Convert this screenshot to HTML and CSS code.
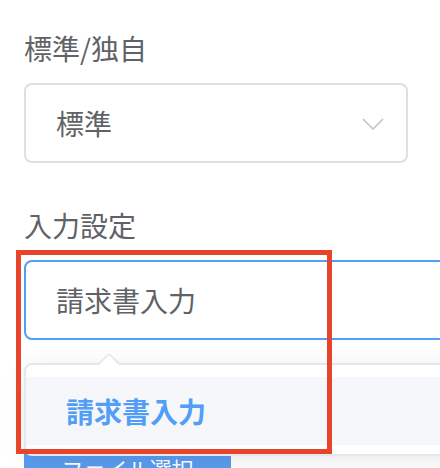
FILE: index.html
```html
<!DOCTYPE HTML>
<html>
<head>
    <title>入力設定</title>
    <meta name="viewport" content="width=device-width, initial-scale=1">
    <meta http-equiv="content-type" content="text/html; charset=utf-8">
    <link rel="stylesheet" href="styles.css">
</head>
<body>
    <div class="page">

      <div class="form-item">
        <div class="form-label">標準/独自</div>
        <div class="select">
          <span class="select-value">標準</span>
          <svg class="chevron" width="22" height="12" viewBox="0 0 22 12">
            <polyline points="1,1 11,11 21,1" fill="none" stroke="#c0c4cc" stroke-width="1.6"/>
          </svg>
        </div>
      </div>

      <div class="form-item">
        <div class="form-label">入力設定</div>
        <div class="select-wrap">
          <div class="select select-open">
            <span class="select-value">請求書入力</span>
          </div>
          <div class="dropdown">
            <span class="dropdown-arrow"></span>
            <div class="dropdown-item selected">請求書入力</div>
          </div>
          <div class="highlight"></div>
        </div>
        <button class="btn-file">ファイル選択</button>
      </div>

    </div>
</body>
</html>
```

FILE: styles.css
```css
* {box-sizing: border-box;}

body {
  margin: 0;
  background: #fff;
  font-family: "Noto Sans CJK JP", "Noto Sans", sans-serif;
  color: #606266;
}

.page {
  width: 440px;
  height: 468px;
  overflow: hidden;
  padding: 28px 0 0 24px;
}

.form-item {
  margin-bottom: 42px;
}

.form-label {
  font-size: 28px;
  line-height: 40px;
  margin-bottom: 15px;
}

.select {
  position: relative;
  display: flex;
  align-items: center;
  justify-content: space-between;
  width: 384px;
  height: 80px;
  padding: 0 22px 0 30px;
  border: 2px solid #dcdfe6;
  border-radius: 8px;
  font-size: 28px;
}

.chevron {
  margin-top: 2px;
}

.select-wrap {
  position: relative;
}

.select-open {
  width: 500px;
  border-color: #529ef6;
}

.dropdown {
  position: absolute;
  top: 103px;
  left: 0;
  width: 500px;
  padding: 12px 0 9px;
  background: #fff;
  border: 2px solid #e4e7ed;
  border-radius: 8px;
  box-shadow: 0 4px 24px rgba(0, 0, 0, 0.09);
  z-index: 10;
}

.dropdown-arrow {
  position: absolute;
  top: -12px;
  left: 70px;
  width: 0;
  height: 0;
  border-left: 13px solid transparent;
  border-right: 13px solid transparent;
  border-bottom: 12px solid #e4e7ed;
}

.dropdown-arrow::after {
  content: "";
  position: absolute;
  top: 2px;
  left: -11px;
  border-left: 11px solid transparent;
  border-right: 11px solid transparent;
  border-bottom: 11px solid #fff;
}

.dropdown-item {
  height: 68px;
  line-height: 68px;
  padding-left: 40px;
  font-size: 28px;
}

.dropdown-item.selected {
  background: #f5f7fa;
  color: #529ef6;
  font-weight: bold;
}

.highlight {
  position: absolute;
  top: -10px;
  left: -8px;
  width: 316px;
  height: 204px;
  border: 5px solid #e8432b;
  z-index: 20;
}

.btn-file {
  display: block;
  width: 207px;
  height: 80px;
  margin-top: 88px;
  border: 0;
  border-radius: 0;
  background: #5a9cf0;
  color: #fff;
  font-family: inherit;
  font-size: 22px;
}
```
